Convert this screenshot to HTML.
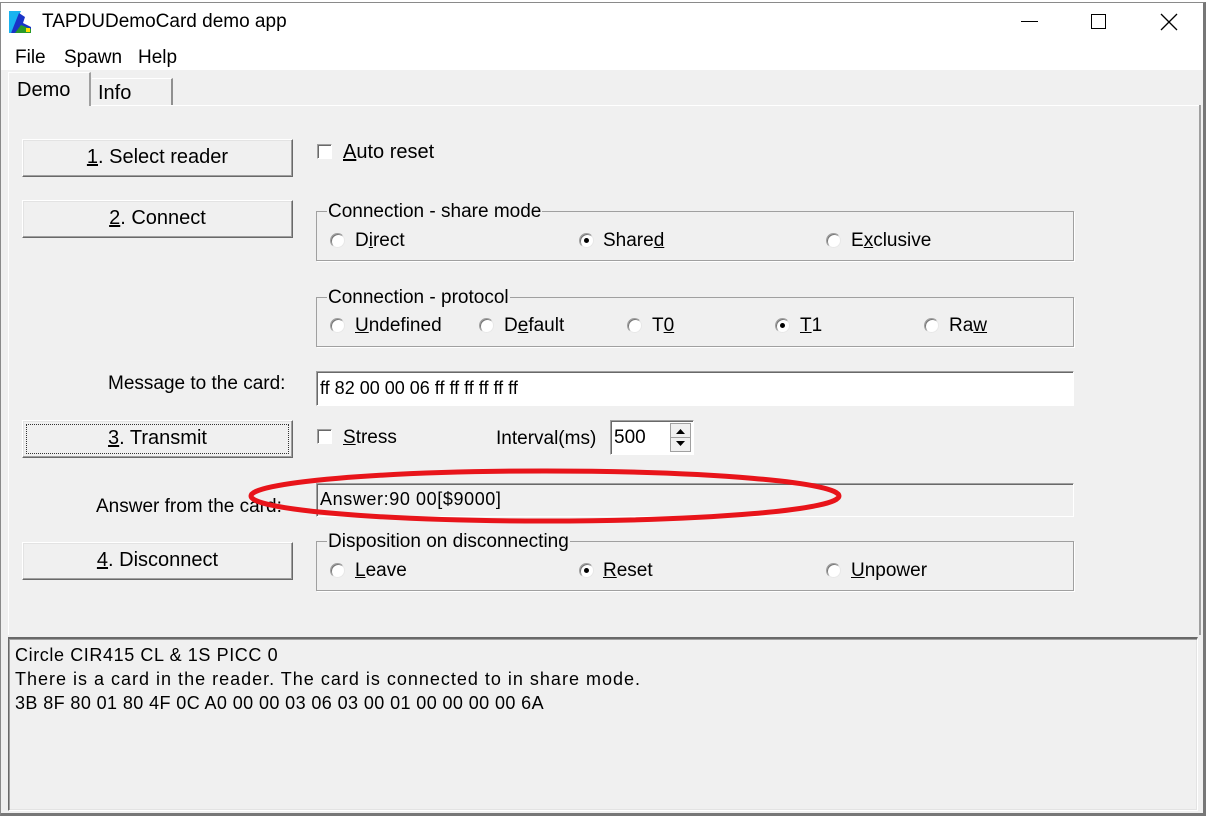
<!DOCTYPE html>
<html><head><meta charset="utf-8"><style>
*{margin:0;padding:0;box-sizing:border-box}
body{width:1209px;height:818px;background:#fff;font-family:"Liberation Sans",Arial,sans-serif;font-size:19px;color:#000;position:relative;overflow:hidden}
.a{position:absolute;white-space:nowrap}
.win{position:absolute;left:0;top:2px;width:1206px;height:814px;border:1px solid #8a8a8a;border-right:3px solid #777;border-bottom:3px solid #777}
.btn{position:absolute;left:22px;width:271px;height:38px;background:#f0f0f0;border:1px solid;border-color:#fff #696969 #696969 #fff;box-shadow:inset -1px -1px 0 #a0a0a0,inset 1px 1px 0 #e3e3e3;text-align:center;line-height:35px;font-size:20px}
.grp{position:absolute;left:316px;width:758px;height:50px;border:1px solid #a0a0a0;box-shadow:1px 1px 0 #fff}
.lg{position:absolute;top:-10px;left:10px;background:#f0f0f0;padding:0 1px;line-height:20px}
.r{position:absolute;width:15px;height:15px;border-radius:50%;background:#fff;border:1px solid;border-color:#a0a0a0 #e8e8e8 #e8e8e8 #a0a0a0;box-shadow:inset 1px 1px 0 #777}
.r.on::after{content:"";position:absolute;left:4px;top:4px;width:5px;height:5px;border-radius:50%;background:#000}
.cb{position:absolute;width:15px;height:15px;background:#fff;border:1px solid;border-color:#a0a0a0 #fff #fff #a0a0a0;box-shadow:inset 1px 1px 0 #696969}
.t{position:absolute;line-height:22px}
u{text-decoration:underline}
</style></head><body>
<div class="win"></div>
<svg class="a" style="left:9px;top:9px" width="24" height="24" viewBox="0 0 24 24"><rect x="0" y="0" width="24" height="24" fill="#fff"/><polygon points="0,2 12,2 2,24 0,24" fill="#19b3f0"/><polygon points="2,24 10,4 16,8 14,14 22,18 22,24" fill="#1a34c8"/><polygon points="6,24 12,16 22,20 22,24" fill="#2a9a2a"/><rect x="17" y="19" width="4" height="4" fill="#ffe000"/></svg>
<div class="a" style="left:42px;top:11px;font-size:19px">TAPDUDemoCard demo app</div>
<div class="a" style="left:1021px;top:21px;width:17px;height:1px;background:#000"></div>
<div class="a" style="left:1091px;top:14px;width:15px;height:15px;border:1px solid #000"></div>
<svg class="a" style="left:1160px;top:13px" width="18" height="18"><path d="M1 1L17 17M17 1L1 17" stroke="#000" stroke-width="1.3"/></svg>
<div class="a" style="left:15px;top:47px;font-size:19px">File</div>
<div class="a" style="left:64px;top:47px;font-size:19px">Spawn</div>
<div class="a" style="left:138px;top:47px;font-size:19px">Help</div>
<div class="a" style="left:1px;top:70px;width:1202px;height:743px;background:#f0f0f0"></div>
<div class="a" style="left:8px;top:105px;width:1193px;height:1px;background:#fff"></div>
<div class="a" style="left:8px;top:105px;width:1px;height:530px;background:#fff"></div>
<div class="a" style="left:1199px;top:105px;width:2px;height:530px;background:#a0a0a0"></div>
<div class="a" style="left:8px;top:72px;width:83px;height:34px;border-left:1px solid #fff;border-top:1px solid #fff;border-right:2px solid #a0a0a0;background:#f0f0f0"></div>
<div class="a" style="left:17px;top:79px;font-size:20px">Demo</div>
<div class="a" style="left:92px;top:78px;width:81px;height:27px;border-top:1px solid #fff;border-right:2px solid #909090"></div>
<div class="a" style="left:98px;top:82px;font-size:20px">Info</div>

<div class="btn" style="top:139px"><u>1</u>. Select reader</div>
<div class="btn" style="top:200px"><u>2</u>. Connect</div>
<div class="btn" style="top:420px;outline:1px dotted #333;outline-offset:-5px"><u>3</u>. Transmit</div>
<div class="btn" style="top:542px"><u>4</u>. Disconnect</div>

<div class="cb" style="left:317px;top:144px"></div>
<div class="t" style="left:343px;top:141px;font-size:20px"><u>A</u>uto reset</div>

<div class="grp" style="top:211px"><div class="lg">Connection - share mode</div></div>
<div class="r" style="left:330px;top:233px"></div><div class="t" style="left:355px;top:230px">D<u>i</u>rect</div>
<div class="r on" style="left:579px;top:233px"></div><div class="t" style="left:603px;top:230px">Share<u>d</u></div>
<div class="r" style="left:826px;top:233px"></div><div class="t" style="left:851px;top:230px">E<u>x</u>clusive</div>

<div class="grp" style="top:297px"><div class="lg">Connection - protocol</div></div>
<div class="r" style="left:330px;top:318px"></div><div class="t" style="left:355px;top:315px"><u>U</u>ndefined</div>
<div class="r" style="left:479px;top:318px"></div><div class="t" style="left:504px;top:315px">D<u>e</u>fault</div>
<div class="r" style="left:627px;top:318px"></div><div class="t" style="left:652px;top:315px">T<u>0</u></div>
<div class="r on" style="left:775px;top:318px"></div><div class="t" style="left:800px;top:315px"><u>T</u>1</div>
<div class="r" style="left:924px;top:318px"></div><div class="t" style="left:949px;top:315px">Ra<u>w</u></div>

<div class="t" style="left:108px;top:373px">Message to the card:</div>
<div class="a" style="left:316px;top:371px;width:758px;height:35px;background:#fff;border:1px solid;border-color:#a0a0a0 #fff #fff #a0a0a0;box-shadow:inset 1px 1px 0 #696969"></div>
<div class="t" style="left:320px;top:377px;font-size:18px">ff 82 00 00 06 ff ff ff ff ff ff</div>

<div class="cb" style="left:317px;top:429px"></div>
<div class="t" style="left:343px;top:427px"><u>S</u>tress</div>
<div class="t" style="left:496px;top:428px">Interval(ms)</div>
<div class="a" style="left:610px;top:420px;width:84px;height:35px;background:#fff;border:1px solid;border-color:#a0a0a0 #fff #fff #a0a0a0;box-shadow:inset 1px 1px 0 #696969"></div>
<div class="t" style="left:614px;top:427px">500</div>
<div class="a" style="left:670px;top:423px;width:21px;height:29px;background:#f0f0f0;border:1px solid #a0a0a0"></div>
<svg class="a" style="left:670px;top:423px" width="21" height="29"><path d="M6 11L10.5 6L15 11Z M6 18L10.5 23L15 18Z" fill="#000"/><line x1="1" y1="14.5" x2="20" y2="14.5" stroke="#a0a0a0"/></svg>

<div class="t" style="left:96px;top:496px">Answer from the card:</div>
<div class="a" style="left:316px;top:483px;width:758px;height:34px;background:#f0f0f0;border:1px solid;border-color:#a0a0a0 #fff #fff #a0a0a0;box-shadow:inset 1px 1px 0 #696969"></div>
<div class="t" style="left:320px;top:488px;font-size:18px;letter-spacing:0.6px">Answer:90 00[$9000]</div>

<div class="grp" style="top:541px"><div class="lg">Disposition on disconnecting</div></div>
<div class="r" style="left:330px;top:563px"></div><div class="t" style="left:355px;top:560px"><u>L</u>eave</div>
<div class="r on" style="left:579px;top:563px"></div><div class="t" style="left:603px;top:560px"><u>R</u>eset</div>
<div class="r" style="left:826px;top:563px"></div><div class="t" style="left:851px;top:560px"><u>U</u>npower</div>

<svg class="a" style="left:0;top:0" width="1209" height="818"><ellipse cx="545" cy="496" rx="294" ry="25" fill="none" stroke="#e8141a" stroke-width="5"/></svg>

<div class="a" style="left:8px;top:637px;width:1190px;height:174px;border:1px solid;border-color:#696969 #fff #fff #696969;border-top-width:2px;box-shadow:inset 1px 1px 0 #a0a0a0, inset -1px -1px 0 #e3e3e3"></div>
<div class="t" style="left:15px;top:643px;font-size:18px;line-height:24px"><span style="letter-spacing:0.6px">Circle CIR415 CL &amp; 1S PICC 0</span><br><span style="letter-spacing:1px">There is a card in the reader. The card is connected to in share mode.</span><br><span style="letter-spacing:0.4px">3B 8F 80 01 80 4F 0C A0 00 00 03 06 03 00 01 00 00 00 00 6A</span></div>
</body></html>
